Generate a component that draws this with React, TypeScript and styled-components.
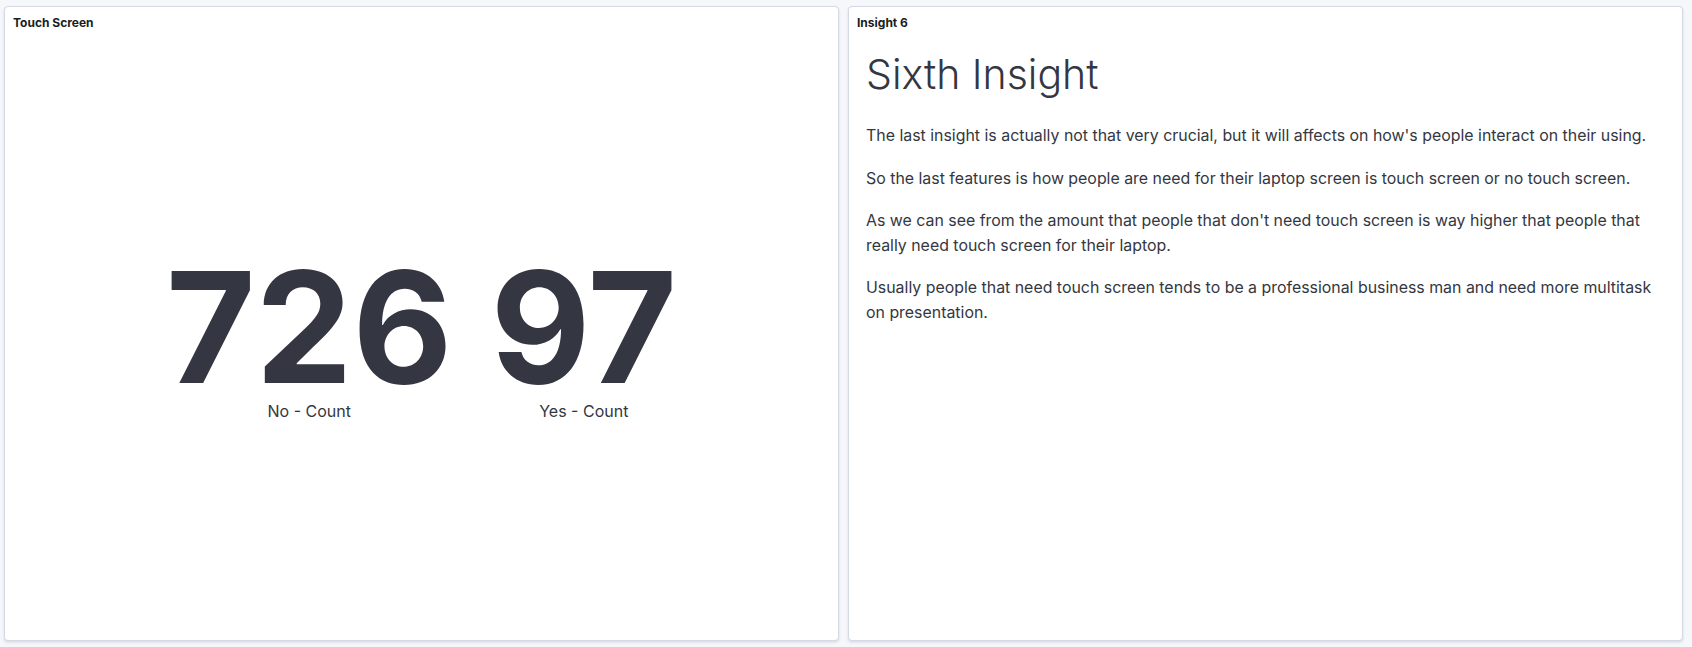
import React from "react";
import styled, { createGlobalStyle } from "styled-components";

const Global = createGlobalStyle`
  html, body { margin: 0; padding: 0; background: #f5f7fa; }
  body { font-family: Inter, "Noto Sans", sans-serif; color: #343741; }
  * { box-sizing: border-box; }
`;

const Grid = styled.div`
  display: grid;
  grid-template-columns: 835px 835px;
  column-gap: 9px;
  padding: 6px 10px 0 4px;
  height: 647px;
`;

const Panel = styled.section`
  background: #fff;
  border: 1px solid #d3dae6;
  border-radius: 4px;
  box-shadow: 0 1px 2px rgba(152, 162, 179, 0.2), 0 2px 3px rgba(152, 162, 179, 0.15);
  height: 635px;
  display: flex;
  flex-direction: column;
  overflow: hidden;
`;

const PanelTitle = styled.h2`
  margin: 0;
  padding: 8px 8px 0 8px;
  height: 24px;
  font-size: 12px;
  line-height: 16px;
  font-weight: 700;
  color: #1a1c21;
`;

const MetricBody = styled.div`
  flex: 1;
  display: flex;
  justify-content: center;
  align-items: center;
  padding-top: 3px;
`;

const Metric = styled.div`
  display: flex;
  flex-direction: column;
  align-items: center;
  padding: 0 19px;
`;

const MetricValue = styled.div`
  font-size: 154px;
  line-height: 148px;
  height: 148px;
  font-weight: 700;
  color: #343741;
`;

const MetricLabel = styled.div`
  font-size: 16px;
  line-height: 20px;
  color: #343741;
`;

const Markdown = styled.div`
  flex: 1;
  padding: 19px 17px 0 17px;
  color: #343741;
`;

const H1 = styled.h1`
  margin: 0 0 26px 0;
  font-size: 41px;
  line-height: 48px;
  font-weight: 300;
  color: #343741;
`;

const P = styled.p`
  margin: 0 0 18px 0;
  font-size: 15.9px;
  line-height: 24.5px;
  font-weight: 400;
`;

export default function App() {
  return (
    <>
      <Global />
      <Grid>
        <Panel>
          <PanelTitle>Touch Screen</PanelTitle>
          <MetricBody>
            <Metric>
              <MetricValue>726</MetricValue>
              <MetricLabel>No - Count</MetricLabel>
            </Metric>
            <Metric>
              <MetricValue>97</MetricValue>
              <MetricLabel>Yes - Count</MetricLabel>
            </Metric>
          </MetricBody>
        </Panel>
        <Panel>
          <PanelTitle>Insight 6</PanelTitle>
          <Markdown>
            <H1>Sixth Insight</H1>
            <P>The last insight is actually not that very crucial, but it will affects on how's people interact on their using.</P>
            <P>So the last features is how people are need for their laptop screen is touch screen or no touch screen.</P>
            <P>As we can see from the amount that people that don't need touch screen is way higher that people that really need touch screen for their laptop.</P>
            <P>Usually people that need touch screen tends to be a professional business man and need more multitask on presentation.</P>
          </Markdown>
        </Panel>
      </Grid>
    </>
  );
}
